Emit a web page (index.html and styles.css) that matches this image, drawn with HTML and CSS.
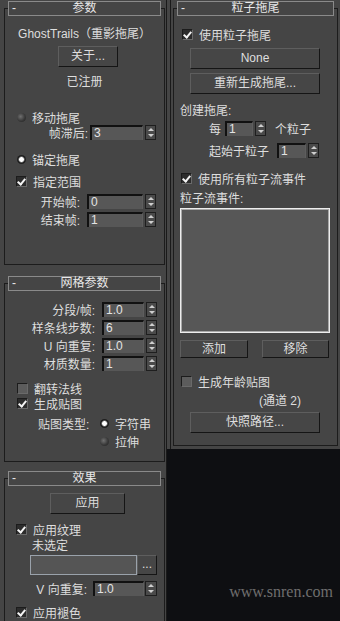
FILE: index.html
```html
<!DOCTYPE html>
<html lang="zh">
<head>
    <meta charset="UTF-8">
    <title>GhostTrails</title>
    <link rel="stylesheet" href="styles.css">
</head>
<body>
    <div class="panels">
        <div class="col-left">
            <!-- 参数 -->
            <div class="rollout r1">
                <div class="head"><span class="minus">-</span><span class="title">参数</span></div>
                <div class="line center r1-title">GhostTrails（重影拖尾）</div>
                <div class="btn r1-about">关于...</div>
                <div class="line center r1-reg">已注册</div>
                <div class="opt r1-move"><i class="rad"></i>移动拖尾</div>
                <div class="spin-row r1-lag">
                    <span class="lbl">帧滞后:</span>
                    <span class="field">3</span>
                    <span class="arrows"><i class="up"></i><i class="dn"></i></span>
                </div>
                <div class="opt r1-anchor"><i class="rad on"></i>锚定拖尾</div>
                <div class="opt r1-range"><i class="chk on"></i>指定范围</div>
                <div class="spin-row r1-start">
                    <span class="lbl">开始帧:</span>
                    <span class="field">0</span>
                    <span class="arrows"><i class="up"></i><i class="dn"></i></span>
                </div>
                <div class="spin-row r1-end">
                    <span class="lbl">结束帧:</span>
                    <span class="field">1</span>
                    <span class="arrows"><i class="up"></i><i class="dn"></i></span>
                </div>
            </div>

            <!-- 网格参数 -->
            <div class="rollout r2">
                <div class="head"><span class="minus">-</span><span class="title">网格参数</span></div>
                <div class="spin-row r2-seg">
                    <span class="lbl">分段/帧:</span>
                    <span class="field">1.0</span>
                    <span class="arrows"><i class="up"></i><i class="dn"></i></span>
                </div>
                <div class="spin-row r2-row">
                    <span class="lbl">样条线步数:</span>
                    <span class="field">6</span>
                    <span class="arrows"><i class="up"></i><i class="dn"></i></span>
                </div>
                <div class="spin-row r2-row">
                    <span class="lbl">U 向重复:</span>
                    <span class="field">1.0</span>
                    <span class="arrows"><i class="up"></i><i class="dn"></i></span>
                </div>
                <div class="spin-row r2-row">
                    <span class="lbl">材质数量:</span>
                    <span class="field">1</span>
                    <span class="arrows"><i class="up"></i><i class="dn"></i></span>
                </div>
                <div class="opt r2-flip"><i class="chk"></i>翻转法线</div>
                <div class="opt r2-gen"><i class="chk on"></i>生成贴图</div>
                <div class="opt r2-type"><span class="type-lbl">贴图类型:</span><i class="rad on"></i>字符串</div>
                <div class="opt r2-stretch"><i class="rad"></i>拉伸</div>
            </div>

            <!-- 效果 -->
            <div class="rollout r3">
                <div class="head"><span class="minus">-</span><span class="title">效果</span></div>
                <div class="btn r3-apply">应用</div>
                <div class="opt r3-tex"><i class="chk on"></i>应用纹理</div>
                <div class="line r3-none">未选定</div>
                <div class="r3-map">
                    <span class="map-field"></span>
                    <span class="btn dots">...</span>
                </div>
                <div class="spin-row r3-v">
                    <span class="lbl">V 向重复:</span>
                    <span class="field">1.0</span>
                    <span class="arrows"><i class="up"></i><i class="dn"></i></span>
                </div>
                <div class="opt r3-fade"><i class="chk on"></i>应用褪色</div>
            </div>
        </div>

        <div class="col-right">
            <div class="right-panel">
                <!-- 粒子拖尾 -->
                <div class="rollout rp">
                    <div class="head"><span class="minus">-</span><span class="title">粒子拖尾</span></div>
                    <div class="opt rp-use"><i class="chk on"></i>使用粒子拖尾</div>
                    <div class="btn wide rp-none">None</div>
                    <div class="btn wide rp-regen">重新生成拖尾...</div>
                    <div class="line rp-create">创建拖尾:</div>
                    <div class="spin-row rp-every">
                        <span class="lbl">每</span>
                        <span class="field">1</span>
                        <span class="arrows"><i class="up"></i><i class="dn"></i></span>
                        <span class="after">个粒子</span>
                    </div>
                    <div class="spin-row rp-from">
                        <span class="lbl">起始于粒子</span>
                        <span class="field">1</span>
                        <span class="arrows"><i class="up"></i><i class="dn"></i></span>
                    </div>
                    <div class="opt rp-all"><i class="chk on"></i>使用所有粒子流事件</div>
                    <div class="line rp-events">粒子流事件:</div>
                    <div class="event-list"></div>
                    <div class="rp-buttons">
                        <span class="btn small">添加</span>
                        <span class="btn small">移除</span>
                    </div>
                    <div class="opt rp-age"><i class="chk"></i>生成年龄贴图</div>
                    <div class="line rp-channel">(通道 2)</div>
                    <div class="btn wide rp-snap">快照路径...</div>
                </div>
            </div>
            <div class="dark">
                <span class="watermark">www.snren.com</span>
            </div>
        </div>
    </div>
</body>
</html>
```

FILE: styles.css
```css
* {
    margin: 0;
    padding: 0;
    box-sizing: border-box;
}

body {
    background-color: #0e0f12;
    font-family: "Liberation Sans", "Noto Sans CJK SC", sans-serif;
    font-size: 12px;
    color: #dedede;
    width: 340px;
    height: 621px;
    overflow: hidden;
}

.panels {
    display: flex;
    height: 621px;
}

.col-left {
    width: 167px;
    background-color: #454545;
    border-right: 1px solid #1a1a1a;
    padding-top: 8px;
}

.col-right {
    flex: 1;
    display: flex;
    flex-direction: column;
}

.right-panel {
    background-color: #454545;
    border-left: 1px solid #1a1a1a;
    box-shadow: -3px 0 0 #454545;
    margin-left: 3px;
    padding: 8px 2px 3px 2px;
}

.dark {
    flex: 1;
    display: flex;
    justify-content: flex-end;
    align-items: flex-end;
    padding: 0 7px 20px 0;
}

.watermark {
    font-family: "Liberation Serif", serif;
    font-size: 16px;
    color: #6e6e6e;
}

/* rollouts */

.rollout {
    border: 1px solid #1c1c1c;
    margin-left: 4px;
    margin-right: 1px;
}

.rp {
    margin: 0;
    padding-bottom: 12px;
}

.head {
    margin: -8px 3px 0;
    height: 15px;
    border: 1px solid #8a8a8a;
    background-color: #454545;
    display: flex;
    align-items: center;
    position: relative;
    color: #e8e8e8;
}

.head .minus {
    position: absolute;
    left: 3px;
    top: -1px;
}

.head .title {
    flex: 1;
    text-align: center;
    line-height: 13px;
}

.line {
    height: 14px;
    line-height: 14px;
    white-space: nowrap;
}

.center {
    text-align: center;
}

.btn {
    display: block;
    height: 21px;
    line-height: 19px;
    text-align: center;
    background-color: #464646;
    border-top: 1px solid #5e5e5e;
    border-left: 1px solid #5e5e5e;
    border-right: 1px solid #151515;
    border-bottom: 1px solid #151515;
    color: #dedede;
}

.opt {
    height: 14px;
    display: flex;
    align-items: center;
    white-space: nowrap;
}

.chk {
    width: 11px;
    height: 11px;
    flex: none;
    background-color: #5c5c5c;
    border-top: 1px solid #1c1c1c;
    border-left: 1px solid #1c1c1c;
    border-right: 1px solid #6a6a6a;
    border-bottom: 1px solid #6a6a6a;
    margin-right: 6px;
    position: relative;
}

.chk.on {
    background-color: #2c2c2c;
}

.chk.on::after {
    content: "";
    position: absolute;
    left: 2px;
    top: 0px;
    width: 3px;
    height: 6px;
    border-right: 2px solid #f4f4f4;
    border-bottom: 2px solid #f4f4f4;
    transform: rotate(40deg);
}

.rad {
    width: 9px;
    height: 9px;
    flex: none;
    border-radius: 50%;
    background: radial-gradient(circle at 40% 40%, #707070, #3a3a3a 55%, #1c1c1c 100%);
    margin-right: 6px;
}

.rad.on {
    background: radial-gradient(circle, #ffffff 0 2px, #9a9a9a 2.5px, #1e1e1e 3.5px);
}

/* spinners */

.spin-row {
    height: 15px;
    display: flex;
    align-items: center;
    white-space: nowrap;
}

.spin-row .lbl {
    text-align: right;
    flex: none;
}

.field {
    height: 15px;
    line-height: 13px;
    flex: none;
    background-color: #575757;
    border-top: 2px solid #111;
    border-left: 2px solid #111;
    border-right: 1px solid #5e5e5e;
    padding-left: 2px;
    font-size: 12px;
    color: #e4e4e4;
}

.arrows {
    width: 11px;
    height: 15px;
    flex: none;
    margin-left: 2px;
    background-color: #4a4a4a;
    border: 1px solid #1e1e1e;
    display: flex;
    flex-direction: column;
    align-items: center;
    justify-content: space-around;
}

.arrows .up {
    width: 0;
    height: 0;
    border-left: 3px solid transparent;
    border-right: 3px solid transparent;
    border-bottom: 3px solid #cfcfcf;
}

.arrows .dn {
    width: 0;
    height: 0;
    border-left: 3px solid transparent;
    border-right: 3px solid transparent;
    border-top: 3px solid #cfcfcf;
}

/* 参数 */

.r1-title { margin-top: 11px; }
.r1-about { margin: 5px 0 0 53px; width: 60px; }
.r1-reg { margin-top: 8px; }
.r1-move { margin: 21px 0 0 12px; }
.r1-lag { margin-top: 1px; }
.r1-lag .lbl { width: 83px; margin-right: 2px; }
.r1-lag .field { width: 53px; }
.r1-anchor { margin: 12px 0 0 12px; }
.r1-range { margin: 8px 0 0 11px; }
.r1-start { margin-top: 6px; }
.r1-end { margin-top: 3px; }
.r1-start .lbl, .r1-end .lbl { width: 75px; margin-right: 7px; }
.r1-start .field, .r1-end .field { width: 56px; }
.r1 { padding-bottom: 37px; }

/* 网格参数 */

.r2 { margin-top: 18px; padding-bottom: 13px; }
.r2-seg { margin-top: 11px; }
.r2-row { margin-top: 3px; }
.r2 .lbl { width: 90px; margin-right: 7px; }
.r2 .field { width: 42px; }
.r2-flip { margin: 10px 0 0 12px; }
.r2-gen { margin: 1px 0 0 12px; }
.r2-type { margin: 6px 0 0 33px; }
.type-lbl { width: 62px; }
.r2-stretch { margin: 4px 0 0 95px; }

/* 效果 */

.r3 { margin-top: 16px; padding-bottom: 20px; }
.r3-apply { margin: 7px 0 0 45px; width: 75px; }
.r3-tex { margin: 8px 0 0 11px; }
.r3-none { margin: 3px 0 0 27px; }
.r3-map {
    margin: 2px 0 0 25px;
    display: flex;
    height: 20px;
}
.map-field {
    width: 107px;
    height: 20px;
    background-color: #555;
    border: 1px solid #9aa2ab;
}
.dots {
    width: 20px;
    height: 20px;
    line-height: 16px;
}
.r3-v { margin-top: 6px; }
.r3-v .lbl { width: 82px; margin-right: 6px; }
.r3-v .field { width: 51px; }
.r3-v .arrows { margin-left: 1px; width: 12px; }
.r3-fade { margin: 9px 0 0 11px; }

/* 粒子拖尾 */

.rp-use { margin: 11px 0 0 8px; }
.wide { width: 130px; margin-left: 16px; }
.rp-none { margin-top: 7px; }
.rp-regen { margin-top: 4px; }
.rp-create { margin: 10px 0 0 6px; }
.rp-every { margin: 3px 0 0 35px; }
.rp-every .lbl { margin-right: 4px; }
.rp-every .field { width: 28px; }
.rp-every .after { margin-left: 9px; }
.rp-from { margin: 7px 0 0 35px; }
.rp-from .lbl { margin-right: 8px; }
.rp-from .field { width: 29px; }
.rp-all { margin: 13px 0 0 7px; }
.rp-events { margin: 7px 0 0 6px; }
.event-list {
    margin: 2px 0 0 6px;
    width: 150px;
    height: 125px;
    background-color: #575757;
    border: 1px solid #ededed;
    box-shadow: inset 0 0 0 1px #a8a8a8;
}
.rp-buttons {
    margin: 7px 0 0 6px;
    width: 149px;
    display: flex;
    justify-content: space-between;
}
.small {
    width: 68px;
    height: 18px;
    line-height: 16px;
}
.rp-buttons .small + .small { width: 67px; }
.rp-age { margin: 16px 0 0 7px; }
.rp-channel { margin: 6px 0 0 85px; }
.rp-snap { margin-top: 4px; }
```
